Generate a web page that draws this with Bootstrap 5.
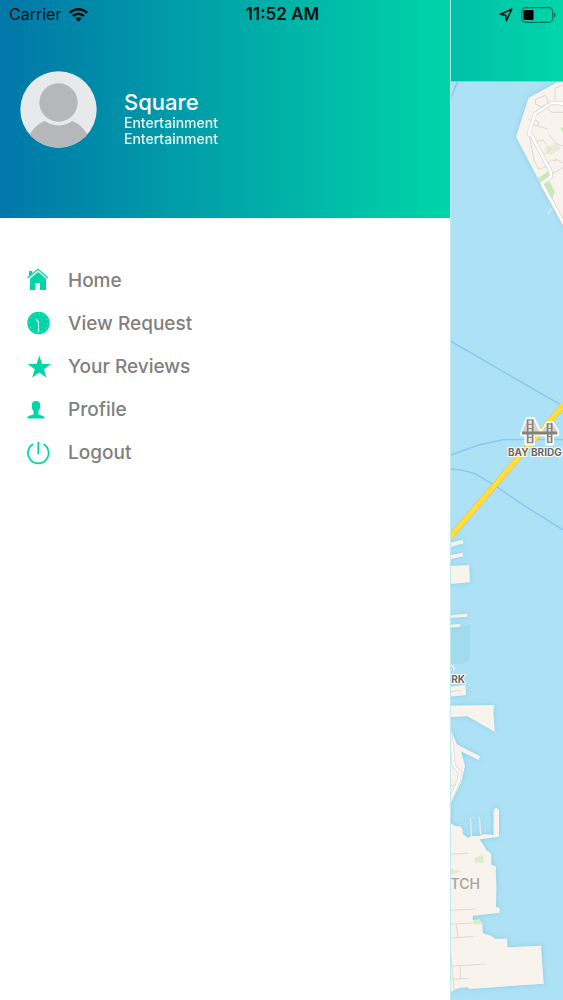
<!DOCTYPE html>
<html lang="en">
<head>
<meta charset="utf-8">
<meta name="viewport" content="width=device-width, initial-scale=1">
<title>Square</title>
<link href="https://cdn.jsdelivr.net/npm/bootstrap@5.3.0/dist/css/bootstrap.min.css" rel="stylesheet">
<style>
  body { font-family: Inter, "Liberation Sans", sans-serif; background: #fff; }
  .status-bar { height: 29px; font-size: 16px; line-height: 29px; color: #06100f; padding: 0 7px 0 9px; z-index: 10; }
  .clock { font-size: 17px; }
  .drawer { width: 80%; }
  .drawer-head { height: 218px; padding: 0 20px; background: linear-gradient(90deg, #0077a8, #00d5a8); gap: 27px; }
  .avatar { width: 77px; height: 77px; flex: none; }
  .profile-text { padding-top: 18px; color: #fff; }
  .profile-name { font-size: 22px; line-height: 26px; }
  .profile-line { font-size: 14px; line-height: 16px; opacity: .92; }
  .menu { padding: 41px 26px; }
  .menu .nav-link { height: 43px; padding: 0; gap: 16px; font-size: 19px; line-height: 24px; color: #808080; }
  .menu svg { width: 26px; height: 26px; flex: none; }
  .map-pane { border-left: 1px solid #bfe9ee; min-width: 0; }
  .map-head { height: 82px; background: linear-gradient(90deg, #00bfa8, #00d6a8); border-bottom: 1px solid #6bdcc6; }
  .map-area { background: #ade1f5; min-height: 0; }
  .map-area text { font-family: Inter, "Liberation Sans", sans-serif; }
</style>
</head>
<body>
<div class="position-relative d-flex min-vh-100 overflow-hidden">
  <div class="status-bar position-absolute top-0 start-0 w-100 d-flex align-items-center">
    <div class="col d-flex align-items-center gap-2">
      <span>Carrier</span>
      <svg width="19" height="14" viewBox="0 0 19 14" fill="none" stroke="#06100f" stroke-width="2.6" aria-label="Wi-Fi">
        <path d="M.9 4.8a12.2 12.2 0 0 1 17.2 0M4 8a7.8 7.8 0 0 1 11 0"/>
        <path d="M9.500 13.700 6.400 10.600a4.400 4.400 0 0 1 6.200 0z" fill="#06100f" stroke="none"/>
      </svg>
    </div>
    <div class="clock fw-semibold">11:52 AM</div>
    <div class="col d-flex align-items-center justify-content-end gap-2">
      <svg width="14" height="14" viewBox="0 0 14 14" fill="none" stroke="#06100f" stroke-width="1.500" stroke-linejoin="round" aria-label="Location">
        <path d="M12.700 1.200 1.300 6.300l5.300.9.8 5.400z"/>
      </svg>
      <svg width="35" height="16" viewBox="0 0 35 16" aria-label="Battery">
        <rect x=".7" y=".7" width="31" height="14.600" rx="4" fill="none" stroke="#06100f" stroke-opacity=".5" stroke-width="1.300"/>
        <rect x="2.500" y="3" width="10" height="10" rx="1" fill="#000"/>
        <path d="M33 5.500c2 .8 2 4.200 0 5z" fill="#06100f" fill-opacity=".5"/>
      </svg>
    </div>
  </div>

  <aside class="drawer flex-shrink-0 bg-white">
    <header class="drawer-head d-flex align-items-center">
      <svg class="avatar" viewBox="0 0 77 77" aria-label="Profile picture">
        <defs><clipPath id="round"><circle cx="38.500" cy="38.500" r="38.200"/></clipPath></defs>
        <g clip-path="url(#round)">
          <rect width="77" height="77" fill="#e8e9eb"/>
          <circle cx="38.500" cy="81" r="34" fill="#b5b7bb"/>
          <circle cx="38.500" cy="31.500" r="23" fill="#e8e9eb"/>
          <circle cx="38.500" cy="31.500" r="19.200" fill="#b5b7bb"/>
        </g>
      </svg>
      <div class="profile-text">
        <div class="profile-name fw-medium">Square</div>
        <div class="profile-line fw-medium">Entertainment</div>
        <div class="profile-line fw-medium">Entertainment</div>
      </div>
    </header>
    <nav class="menu nav flex-column" aria-label="Main menu">
      <a class="nav-link d-flex align-items-center fw-medium" href="#home">
        <svg viewBox="0 0 26 26" fill="#00d5a8"><path d="M3 3h3.300v2.300L3 8.200zM12 4l8 6.800V22h-6v-7H9.500v7H4V10.800z"/><path d="M1.500 10 12 1.300 22 10" fill="none" stroke="#00d5a8" stroke-width="1.200"/></svg>
        Home</a>
      <a class="nav-link d-flex align-items-center fw-medium" href="#requests">
        <svg viewBox="0 0 26 26"><circle cx="12.500" cy="12" r="11.200" fill="#00d5a8"/><circle cx="12.500" cy="12" r="9.200" fill="none" stroke="#9eeedc" stroke-width="1" stroke-dasharray="1 3.820"/><path d="M10 8l2.500 3v10" fill="none" stroke="#d8fff5" stroke-width="1.200"/></svg>
        View Request</a>
      <a class="nav-link d-flex align-items-center fw-medium" href="#reviews">
        <svg viewBox="0 0 26 26" fill="#00d5a8"><path d="M13.300 1.500 16.100 10H25l-7.200 5.300 2.700 8.400-7.200-5.200-7.200 5.200 2.700-8.400L1.600 10h8.900z"/></svg>
        Your Reviews</a>
      <a class="nav-link d-flex align-items-center fw-medium" href="#profile">
        <svg viewBox="0 0 26 26" fill="#00d5a8"><path d="M10 4c3 0 4.400 1.800 4.200 4.800-.1 2.700-.6 4-1.800 5.300v3c.5 1.300 5.600 1.300 6 3.500v1H1.500v-1c.4-2.200 5.500-2.200 6-3.500v-3C6.300 12.800 5.900 11.500 5.800 8.800 5.600 5.800 7 4 10 4z"/></svg>
        Profile</a>
      <a class="nav-link d-flex align-items-center fw-medium" href="#logout">
        <svg viewBox="0 0 26 26" fill="none" stroke="#00d5a8" stroke-width="1.700" stroke-linecap="round"><path d="M12.300 2.300V13.500M6.500 4.500a10.300 10.300 0 1 0 11.600 0"/></svg>
        Logout</a>
    </nav>
  </aside>

  <main class="map-pane position-relative flex-fill d-flex flex-column overflow-hidden">
    <div class="map-head flex-shrink-0"></div>
    <div class="map-area position-relative flex-fill">
      <svg class="position-absolute top-0 start-0 w-100 h-100" viewBox="451 82 112 918" preserveAspectRatio="xMinYMin slice" aria-label="Map of the bay">
        <defs>
          <filter id="shore" x="-30%" y="-30%" width="160%" height="160%"><feDropShadow dx="0" dy="0" stdDeviation="8" flood-color="#62b9d8" flood-opacity=".55"/></filter>
        </defs>
        <!-- island -->
        <g transform="translate(443 70) scale(.3333)" fill="none">
          <path d="M22 88 43 36" stroke="#86c6f0" stroke-width="4"/>
          <path d="M370 20 340 38 257 83 219 200 290 335 370 480z" fill="#f8f4ed" filter="url(#shore)"/>
          <path d="M352 175l18-6v30zM285 325l32-23 3 20-28 16zM301 345l18-12 17 33-8 20z" fill="#c8e9b8"/>
          <path d="M302 238l38-20 14 18-34 22z" fill="#e6eedb"/>
          <path d="M277 88l31-12 8 22-22 14-16-10zM336 95V55l30-12M256 148l12 4M272 165l42 12M275 150l12 5-3 14M318 192l20 28 22 8M259 195l6 35 8 40 14 28 34-12M280 215l20-5 22 30-22 16M308 286l17-16 16 2M325 312l36-20M335 265l26 15M312 115l15 12h38" stroke="#ddd7cf" stroke-width="3"/>
          <path d="M370 102 326 98 276 132 257 192 267 198 323 305 324 320 296 340 370 475" stroke="#d8d1cb" stroke-width="12" stroke-linejoin="round"/>
          <path d="M370 102 326 98 276 132 257 192 267 198 323 305 324 320 296 340 370 475" stroke="#fff" stroke-width="8" stroke-linejoin="round"/>
          <path d="M325 415l-9 19" stroke="#d8eef2" stroke-width="4"/>
        </g>
        <!-- ferry lines, bridge road and landmark -->
        <g transform="translate(443 320) scale(.3333)" fill="none">
          <path d="M22 63 300 224 350 252M22 406 108 375 181 359H370M22 447 50 449 94 460 154 495 230 548 370 636" stroke="#86c8f2" stroke-width="4"/>
          <path d="M16 658 370 246" stroke="#efbf64" stroke-width="18"/>
          <path d="M16 658 370 246" stroke="#ffdf38" stroke-width="14"/>
          <path d="M237 334 252 295h20l18 36h8l15-24h16l16 26v12h-15v28h-20v-28h-38v28h-24v-28h-13z" stroke="#fff" stroke-width="7" stroke-linejoin="round"/>
          <path d="M237 336 253 298h18l17 36h10l15-26h14l16 26z" fill="#d0d2d0"/>
          <path d="M254 298h15v72h-15zM314 309h12v60h-12z" fill="#e8e8e4"/>
          <path d="M237 339h106" stroke="#858379" stroke-width="9"/>
          <path d="M254 298v72M269 298v72M314 309v60M326 309v60" stroke="#858379" stroke-width="5"/>
          <path d="M254 300h15M254 313h15M254 326h15M254 352h15M254 368h15M314 312h12M314 325h12M314 350h12M314 367h12" stroke="#858379" stroke-width="3"/>
        </g>
        <text x="508" y="456" font-size="10" font-weight="700" fill="#6b695f" stroke="#fff" stroke-width="2" paint-order="stroke">BAY BRIDG</text>
        <!-- northern piers -->
        <g transform="translate(443 530) scale(.3333)" fill="#f8f4ed" filter="url(#shore)">
          <path d="M10 42 59 29 61 40 10 55zM10 78 59 68 60 79 10 90zM10 109 78 105 81 157 10 163zM10 257 72 251 73 260 10 264zM10 286 51 282 52 291 10 293zM10 472 67 464 69 495 10 501z"/>
        </g>
        <path d="M450 628l20-3v35l-7 4h-13z" fill="#82cbdd" opacity=".25"/>
        <path d="M450 692l11-2" stroke="#ddd7cf"/>
        <path d="M450 668.500h3l-2-3" fill="none" stroke="#fff" stroke-width="2.500"/>
        <path d="M450 669h3l-2-3" fill="none" stroke="#a5a59c" stroke-width=".8"/>
        <!-- southern shore -->
        <g transform="translate(443 690) scale(.3333)">
          <g fill="#f8f4ed" filter="url(#shore)">
            <path d="M10 47 150 45 154 51 151 60 155 125 73 79 10 82z"/>
            <path d="M10 120 24 122 42 163 55 170 111 199 107 210 54 184 66 228 55 275 24 340V400L36 408 52 409 59 419 60 432 74 443 89 438 112 438 122 433 152 435V360q8-12 16 0V440L110 448 132 482 144 490 145 525 158 528 160 590 159 650 170 655V668L90 677 89 690 117 695 120 730 144 737 157 746H192L194 772 294 767 302 881 78 897 75 892 50 893 34 900 22 907 10 907z"/>
            <path d="M82 384l4 58M109 381l4 55" stroke="#e3eee9" stroke-width="4"/>
          </g>
          <path d="M94 503l25-9 5 24-27 1zM22 528l8 12 25 4-15 6-18 4zM90 689l20-1 9 15H92z" fill="#dcecc9"/>
          <path d="M22 493l54-3M22 661l76-4M22 703l66-4M40 703l5 40M22 745l70-6M22 829l103-7M22 868l54-3M52 828v38M22 778l12 130M22 223l10-3M22 287l14-2" stroke="#ddd8d1" stroke-width="3" fill="none"/>
          <path d="M22 130 33 228 51 248 48 270 22 332" stroke="#d8d1cb" stroke-width="11" fill="none"/>
          <path d="M22 130 33 228 51 248 48 270 22 332" stroke="#fff" stroke-width="7" fill="none"/>
        </g>
        <text x="465" y="683" text-anchor="end" font-size="10" font-weight="700" fill="#6b695f" stroke="#fff" stroke-width="2" paint-order="stroke">RK</text>
        <text x="480" y="889" text-anchor="end" font-size="14" font-weight="500" fill="#a5a39e">TCH</text>
      </svg>
    </div>
  </main>
</div>
<script src="https://cdn.jsdelivr.net/npm/bootstrap@5.3.0/dist/js/bootstrap.bundle.min.js"></script>
</body>
</html>
